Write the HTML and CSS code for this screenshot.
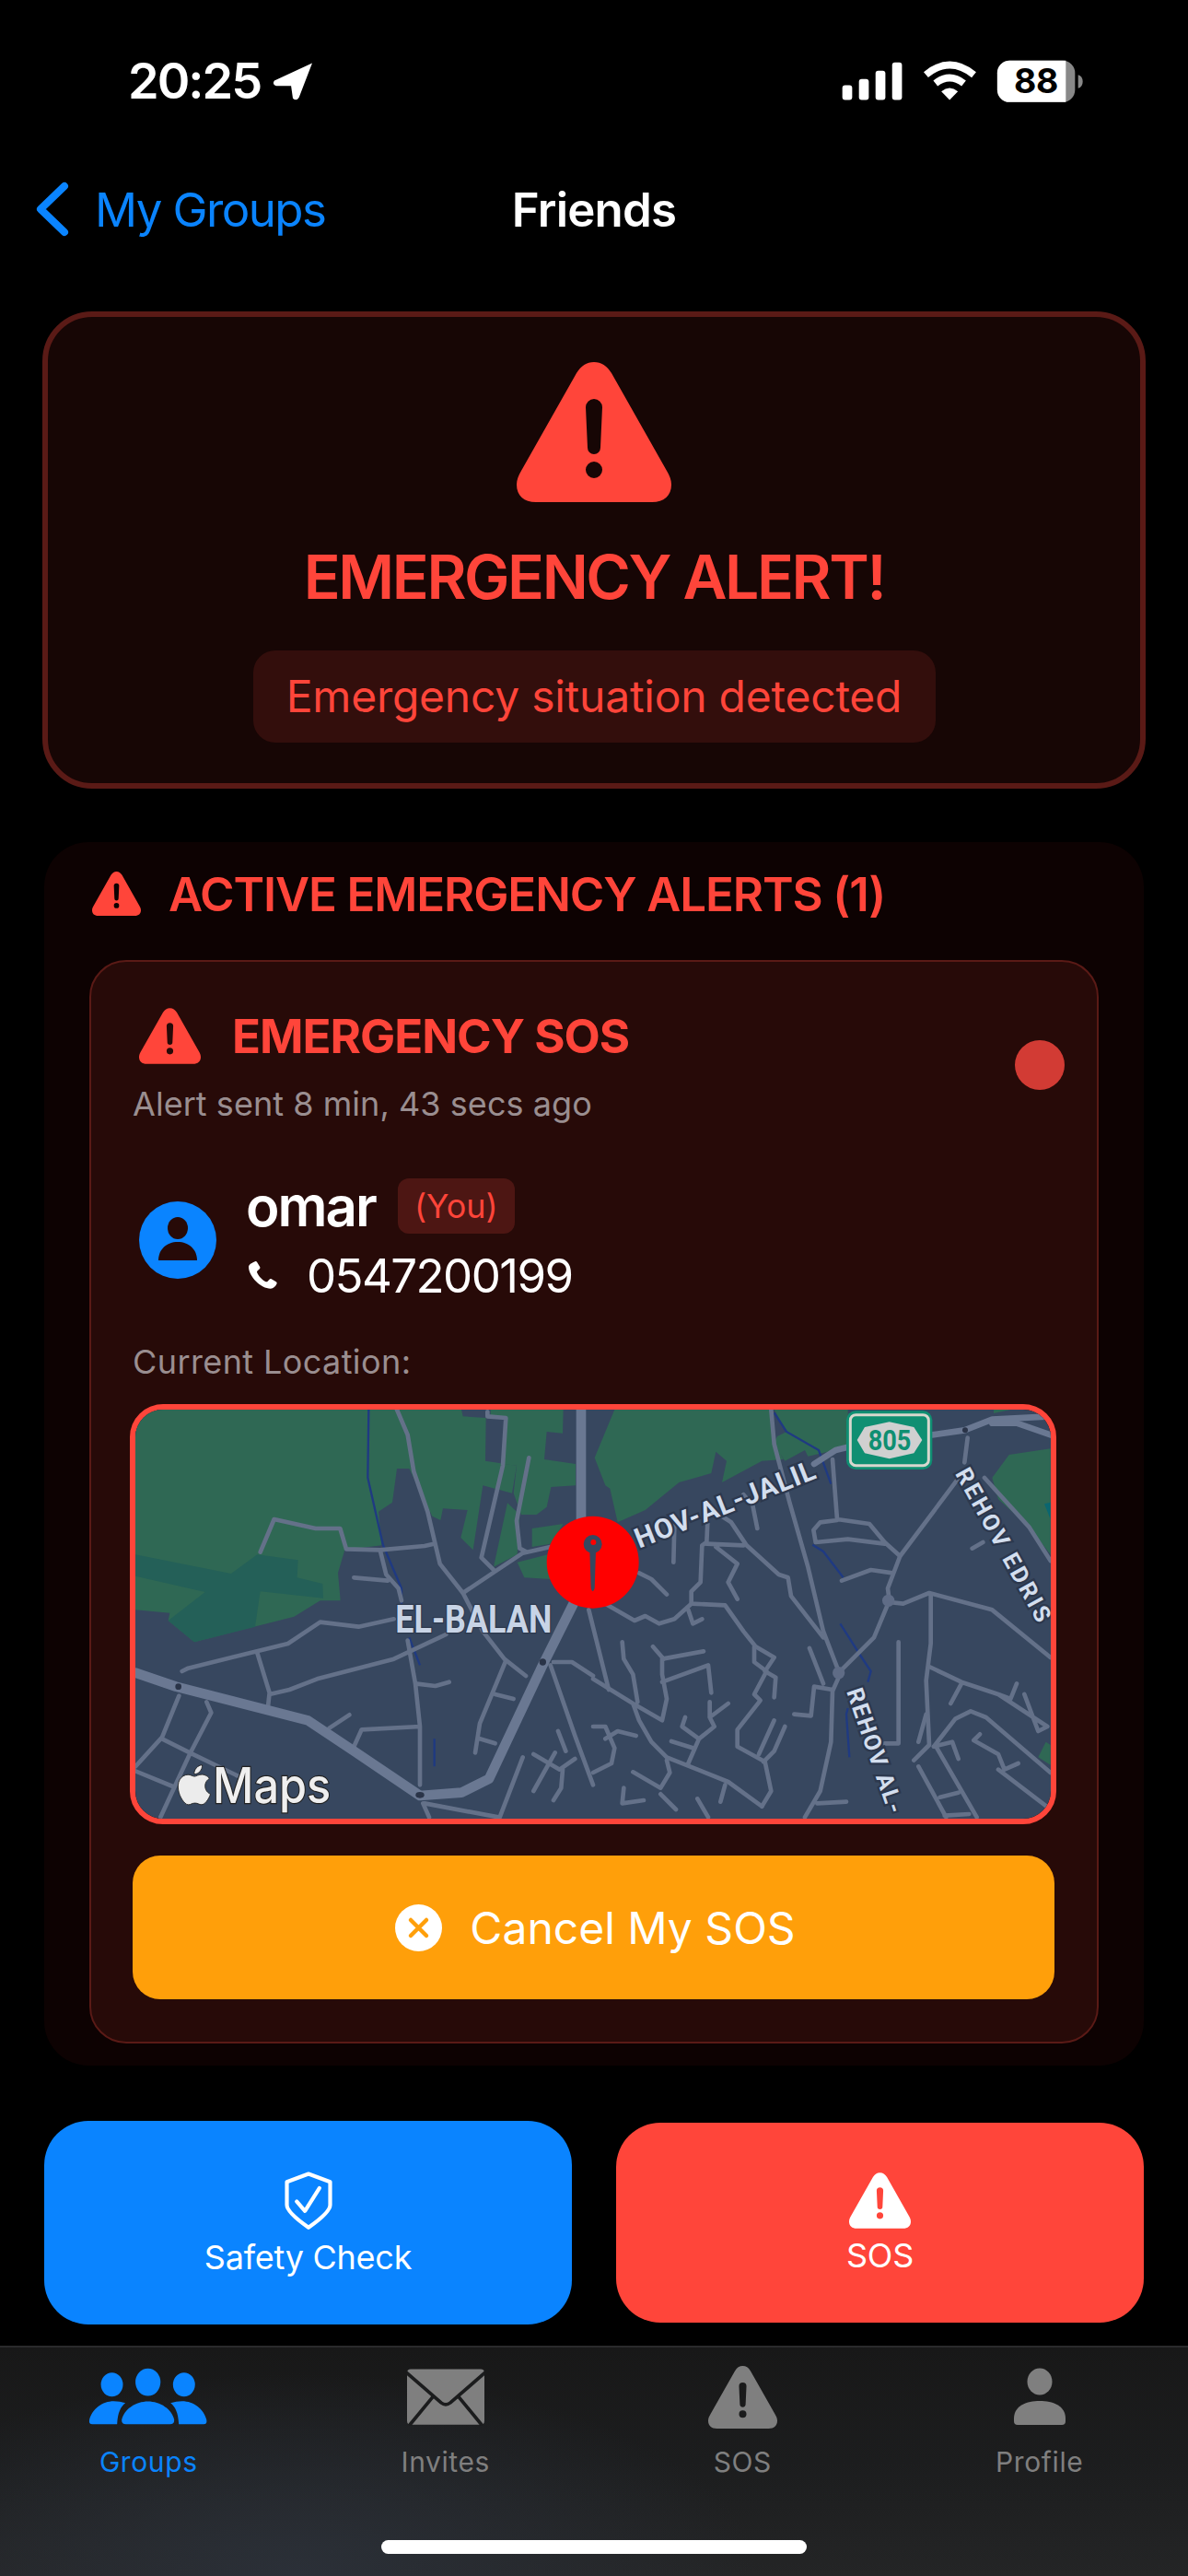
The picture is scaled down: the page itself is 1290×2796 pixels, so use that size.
FILE: index.html
```html
<!DOCTYPE html>
<html lang="en">
<head>
<meta charset="utf-8">
<title>Friends</title>
<link rel="stylesheet" href="styles.css">
</head>
<body>
<svg class="defs" width="0" height="0" aria-hidden="true">
  <symbol id="warn" viewBox="0 0 168 152">
    <path fill="currentColor" fill-rule="evenodd" d="M84 0C92 0 98 4 103 12L163 118C166 123 168 128 168 133C168 145 160 152 147 152H21C8 152 0 145 0 133C0 128 2 123 5 118L65 12C70 4 76 0 84 0ZM75 49A9 9 0 0 1 93 49L91 93A7 7 0 0 1 77 93ZM84 108A9 9 0 1 0 84.01 126A9 9 0 1 0 84 108Z"/>
  </symbol>
</svg>
<header class="status">
  <div class="time-wrap">
    <span class="time">20:25</span>
    <svg class="loc" viewBox="0 0 44 42"><path fill="#fff" d="M44 0L1 20Q-2 24 3 26H20L22 40Q26 44 29 39Z"/></svg>
  </div>
  <svg class="sys" viewBox="100 40 800 140">
    <g fill="#fff">
      <rect x="108" y="122" width="32" height="48" rx="9"/>
      <rect x="162" y="102" width="32" height="68" rx="9"/>
      <rect x="216" y="75" width="32" height="95" rx="9"/>
      <rect x="270" y="48" width="32" height="122" rx="9"/>
      <path d="M430 142Q457 120 484 142L457 170Z"/>
    </g>
    <g fill="none" stroke="#fff" stroke-width="23">
      <path d="M411 116Q457 80 503 116"/>
      <path d="M380 88Q457 24 536 88"/>
    </g>
    <rect x="612" y="42" width="253" height="135" rx="40" fill="#888"/>
    <path fill="#fff" d="M652 42H835V177H652A40 40 0 0 1 612 137V82A40 40 0 0 1 652 42Z"/>
    <path fill="#888" d="M875 88Q890 92 890 110Q890 128 875 132Z"/>
    <text class="batt" x="738" y="146" text-anchor="middle">88</text>
  </svg>
</header>

<nav class="nav">
  <a class="back">
    <svg class="chev" viewBox="0 0 37 60"><path d="M32 5L6 30L32 55"/></svg>
    <span>My Groups</span>
  </a>
  <h1 class="nav-title">Friends</h1>
  <span></span>
</nav>

<section class="banner">
  <svg class="banner-icon"><use href="#warn"/></svg>
  <h2 class="banner-title">EMERGENCY ALERT!</h2>
  <p class="banner-pill">Emergency situation detected</p>
</section>

<section class="panel">
  <div class="panel-head">
    <svg class="panel-icon"><use href="#warn"/></svg>
    <h3 class="panel-title">ACTIVE EMERGENCY ALERTS (1)</h3>
  </div>
  <article class="alert">
    <span class="dot"></span>
    <div class="alert-head">
      <svg class="alert-icon"><use href="#warn"/></svg>
      <h4 class="alert-title">EMERGENCY SOS</h4>
    </div>
    <p class="muted sent">Alert sent 8 min, 43 secs ago</p>
    <div class="user">
      <svg class="avatar" viewBox="0 0 84 84">
        <circle cx="42" cy="42" r="42" fill="#0a84ff"/>
        <ellipse cx="42" cy="29" rx="11" ry="12" fill="#270a08"/>
        <path fill="#270a08" d="M21 64C21 52 30 44 42 44C54 44 63 52 63 64Z"/>
      </svg>
      <div class="user-info">
        <div class="name-row"><span class="name">omar</span><span class="you">(You)</span></div>
        <div class="phone-row">
          <svg class="phone" viewBox="0 0 24 24"><path fill="#fff" d="M6.600 2.200C7.100 1.900 7.800 2.100 8.100 2.600L10.100 6C10.400 6.500 10.300 7.100 9.900 7.500L8.300 9C8 9.300 7.900 9.700 8.100 10.100C8.700 11.400 9.600 12.800 10.700 14C11.800 15.200 13.100 16.200 14.500 16.800C14.900 17 15.300 16.900 15.600 16.600L17 15.100C17.400 14.700 18 14.600 18.500 14.900L21.900 16.900C22.400 17.200 22.600 17.900 22.300 18.400C21.500 20.200 19.900 21.800 17.900 21.800C14.300 21.800 10.400 19.600 7.300 16.500C4.200 13.400 2 9.500 2 6C2 4.300 4.800 3 6.600 2.200Z"/></svg>
          <span class="number">0547200199</span>
        </div>
      </div>
    </div>
    <p class="muted loc-label">Current Location:</p>
    <div class="map">
      <svg class="map-svg" viewBox="18 18 2982 1332" preserveAspectRatio="none">
        <rect x="0" y="0" width="3018" height="1368" fill="#37475f"/>
        <g fill="#2f6854">
          <path d="M18 18H1080L1085 40L1160 45L1158 185L1260 200L1245 290L1150 265L1118 475L1078 435L1100 345L1020 340L1012 378L985 365L910 210H870L855 320L810 350L820 460L700 475L678 550L686 640H620L535 692L210 775L125 705L130 680L18 670Z"/>
          <path d="M1175 18H1412L1410 95L1358 90L1350 180L1452 195V265L1372 270L1358 335L1325 360H1275L1250 290L1260 200L1215 195L1230 45L1175 38Z"/>
          <path d="M1230 322L1185 530L1262 490L1270 360Z"/>
          <path d="M1310 405L1412 390L1370 455L1310 465Z"/>
          <path d="M1262 515L1285 565L1370 570L1400 480Z"/>
        </g>
        <path fill="#246058" d="M18 490L330 552L415 490L548 508L545 565L628 585L630 632L425 610L408 725L210 775L125 705L245 612L18 560Z"/>
        <g class="river">
          <path d="M778 18L775 240L825 460L885 600V680M910 760L945 850M992 1090V1180"/>
        </g>
        <g class="road">
          <path d="M870 18L905 100L925 220L970 350L1010 520L1085 615L1150 740L1220 830L1290 885"/>
          <path d="M425 482L470 375L605 405H685L705 472L815 475L960 462L990 455M815 475L835 555L875 600L885 640M730 565L840 575"/>
          <path d="M1300 175L1260 380L1270 470L1290 480M1165 25V40L1225 45L1215 200L1145 500L1190 545M1085 615L1190 545L1280 485L1370 465"/>
          <path d="M170 870L190 860L515 780L620 710L745 725L860 700M415 810L455 940L450 985M455 945L520 930L610 895L860 830L1030 750"/>
          <path d="M905 770L930 910L945 1050V1240M930 910L995 918L1040 905M650 1055L715 1012M730 1115L755 1060L945 1050"/>
          <path d="M1225 835L1140 1040L1125 1135M1190 945L1250 960M1140 1090L1190 1105"/>
          <path d="M250 970L265 1005L195 1140L100 1345M160 950L105 1085L18 1180M105 1090L195 1135L350 1210M18 1195L140 1245"/>
          <path d="M1280 1150L1205 1345M1395 1065L1420 1130M1315 1140L1400 1190L1450 1155M1385 1135L1315 1260M1410 1190L1405 1250L1380 1290M955 1300L975 1345M960 1300L1200 1345"/>
          <path d="M1370 850L1450 1080L1509 1240M1380 840H1440L1509 885M1495 670L1560 930"/>
        </g>
        <g class="road main">
          <path d="M18 875L150 920L580 1030L730 1130L945 1275L1080 1265L1170 1220L1340 860L1470 600V18"/>
        </g>
        <g transform="translate(1509 0)">
          <g fill="#2f6854">
            <path d="M70 18H575L590 130L625 185L690 150L700 170L830 140V18H590L630 90L600 105L590 125L620 180L550 185L420 255L435 185L400 155L385 225L280 255L170 345L80 385L55 275L40 265L5 175Z"/>
            <path d="M1355 165L1490 145V490L1420 400L1320 310L1300 240Z"/>
            <path d="M1450 1150L1475 1100L1490 1110V1175Z"/>
            <path d="M1305 18H1360L1305 30Z"/>
          </g>
          <path fill="#0b6670" d="M1470 325L1490 320V375Z"/>
          <g class="river">
            <path d="M590 28L630 90L735 150L775 260M715 458L750 480L815 565M805 715L875 825L905 870L895 905M830 990L825 1010L835 1150"/>
          </g>
          <g class="road">
            <path d="M580 18L590 130L640 320L700 530L750 740L800 870"/>
            <path d="M780 180L795 375L900 390L950 450L1000 495M795 378L740 385L718 410L725 450L830 440L950 455"/>
            <path d="M1000 495L1210 215M1000 495L960 600L965 640L915 760L800 875M810 575L905 540L975 550"/>
            <path d="M965 645L1010 650L1095 615L1300 670L1490 825M1100 620V780L1085 900L1095 1110L1045 1160"/>
            <path d="M1095 855L1200 905L1320 945L1360 960L1380 910M1200 910L1165 975M1320 945L1480 1050L1450 1065L1405 945"/>
            <path d="M1110 1115L1180 1025L1230 1000L1280 1020L1490 1200M1260 1075L1240 1095L1320 1140L1340 1190L1385 1170M1320 1190L1490 1320"/>
            <path d="M1060 1180L1150 1345M1120 1120L1250 1345M1130 1280L1190 1265M1145 1340L1225 1335M1110 1115L1170 1100L1190 1155M1060 1100L1085 1010"/>
            <path d="M995 775V1105H950M800 890L780 935L775 1100L740 1260L690 1345M730 1300L825 1295M780 930L720 920L710 1015L655 1010M705 795L750 910"/>
            <path d="M375 340L370 450L355 460L350 580L320 610V650L430 655L490 740L530 790L590 825L560 870L595 890L590 955"/>
            <path d="M380 340L450 385L500 460L605 555L635 565L645 625L750 760M370 455L490 460M400 465L470 520L440 580L470 635M490 295L520 330L535 405M265 395L262 515M150 550L190 570L240 620"/>
            <path d="M40 650L135 705L170 690L215 715L265 700L320 650M310 670L325 715L355 700"/>
            <path d="M0 895L130 975L150 1030L190 1100L240 1150L440 1230L550 1310M130 975L225 1030L240 960L225 880V830L360 805M195 790L230 830M225 905L375 850L385 940M95 775L100 830L130 880L145 970"/>
            <path d="M525 790V840L565 870L525 945L545 965L470 1060V1115L560 1165L580 1260L550 1310M590 1030L540 1140M625 1050L590 1130L555 1165"/>
            <path d="M380 970V1020L440 975M380 1020L395 1050L345 1090L290 1050L300 1020M345 1090L310 1170M255 1098L325 1120"/>
            <path d="M130 1198L220 1250L250 1200L240 1160M220 1270L270 1320M340 1285L375 1345M430 1240L415 1295M100 1250L95 1300L165 1290M0 1050H40L70 1120L60 1170L0 1200M40 1090L80 1065L140 1080"/>
            <path d="M1235 470L1270 450M1210 190L1220 110M1275 240L1420 400L1490 510"/>
          </g>
          <g class="road wide">
            <path d="M720 195L790 150L830 140M1105 100L1210 85L1300 50L1490 40"/>
            <path d="M1300 62L1380 62L1490 100"/>
          </g>
          <circle cx="1212" cy="85" r="9" fill="#2a3448"/>
          <circle cx="800" cy="875" r="20" fill="#5f6c86"/>
          <circle cx="962" cy="640" r="20" fill="#5f6c86"/>
          <rect x="825" y="22" width="280" height="191" rx="30" fill="#0f8f72"/>
          <rect x="838" y="35" width="255" height="165" rx="18" fill="none" stroke="#d7d7ce" stroke-width="9"/>
          <path fill="#d0d0d0" d="M860 117L885 75L965 58L1045 75L1072 117L1045 160L965 178L885 160Z"/>
          <text class="shield-num" x="896" y="150" textLength="140" lengthAdjust="spacingAndGlyphs">805</text>
          <text class="map-label small" transform="translate(150 470) rotate(-21.600)" textLength="625">HOV-AL-JALIL</text>
          <text class="map-label tiny" transform="translate(1178 226) rotate(61)" textLength="560">REHOV EDRIS</text>
          <text class="map-label tiny" transform="translate(825 935) rotate(71)" textLength="425">REHOV AL-</text>
        </g>
        <text class="map-label city" x="865" y="745" textLength="510" lengthAdjust="spacingAndGlyphs">EL-BALAN</text>
        <circle cx="158" cy="920" r="10" fill="#2a3448"/>
        <ellipse cx="945" cy="1273" rx="14" ry="10" fill="#2a3448"/>
        <circle cx="1345" cy="840" r="11" fill="#2a3448"/>
        <path class="apple" transform="translate(145 1175) scale(5.400)" d="M12.152 6.896c-.948 0-2.415-1.078-3.96-1.04-2.04.027-3.91 1.183-4.961 3.014-2.117 3.675-.546 9.103 1.519 12.09 1.013 1.454 2.208 3.09 3.792 3.039 1.52-.065 2.09-.987 3.935-.987 1.831 0 2.35.987 3.96.948 1.637-.026 2.676-1.48 3.676-2.948 1.156-1.688 1.636-3.325 1.662-3.415-.039-.013-3.182-1.221-3.22-4.857-.026-3.04 2.48-4.494 2.597-4.559-1.429-2.09-3.623-2.324-4.39-2.376-2-.156-3.675 1.09-4.61 1.09zM15.53 3.83c.843-1.012 1.4-2.427 1.245-3.83-1.207.052-2.662.805-3.532 1.818-.78.896-1.454 2.338-1.273 3.714 1.338.104 2.715-.688 3.559-1.701"/>
        <text class="maps-word" x="270" y="1300" textLength="385" lengthAdjust="spacingAndGlyphs">Maps</text>
        <circle cx="1508" cy="515" r="150" fill="#ff0000"/>
        <circle cx="1508" cy="456" r="30" fill="#37475f"/>
        <path fill="#37475f" d="M1498 480H1518L1514 600Q1508 620 1502 600Z"/>
        <circle cx="1510" cy="450" r="9" fill="#ff0000"/>
      </svg>
    </div>
    <button class="cancel">
      <svg class="cancel-icon" viewBox="0 0 51 51"><circle cx="25.500" cy="25.500" r="25.500" fill="#fff"/><path d="M17 17L34 34M34 17L17 34" stroke="#ff9f0a" stroke-width="4.500" stroke-linecap="round"/></svg>
      <span>Cancel My SOS</span>
    </button>
  </article>
</section>

<div class="actions">
  <button class="action safety">
    <svg class="shield" viewBox="170 44 170 202"><path d="M255 55L328 82V160Q328 185 255 236Q182 185 182 160V82Z" fill="none" stroke="#fff" stroke-width="13" stroke-linejoin="round"/><path d="M215 148L243 180L292 103" fill="none" stroke="#fff" stroke-width="13" stroke-linecap="round" stroke-linejoin="round"/></svg>
    <span>Safety Check</span>
  </button>
  <button class="action sos">
    <svg class="sos-icon"><use href="#warn"/></svg>
    <span>SOS</span>
  </button>
</div>

<footer class="tabbar">
  <div class="tab active">
    <svg class="tab-groups" viewBox="50 65 390 190">
      <g fill="#0a84ff">
        <ellipse cx="126" cy="120" rx="36" ry="39"/>
        <ellipse cx="244" cy="112" rx="41" ry="45"/>
        <ellipse cx="362" cy="120" rx="36" ry="39"/>
        <path d="M172 250Q158 250 158 236C165 200 205 175 244 175C283 175 323 200 330 236Q330 250 316 250Z"/>
        <path d="M62 250Q50 250 52 236C60 200 95 174 132 174Q152 174 170 180C155 192 145 210 143 250Z"/>
        <path transform="translate(488 0) scale(-1 1)" d="M62 250Q50 250 52 236C60 200 95 174 132 174Q152 174 170 180C155 192 145 210 143 250Z"/>
      </g>
    </svg>
    <span>Groups</span>
  </div>
  <div class="tab">
    <svg class="tab-mail" viewBox="1085 66 250 182">
      <rect x="1085" y="68" width="250" height="179" rx="12" fill="#7f7f7f"/>
      <path d="M1082 78L1195 176Q1210 188 1225 176L1338 78M1092 250L1170 155M1328 250L1250 155" fill="none" stroke="#1b1c1d" stroke-width="11"/>
    </svg>
    <span>Invites</span>
  </div>
  <div class="tab">
    <svg class="tab-sos"><use href="#warn"/></svg>
    <span>SOS</span>
  </div>
  <div class="tab">
    <svg class="tab-profile" viewBox="0 0 56 61">
      <ellipse cx="28" cy="14" rx="13.500" ry="14.500" fill="#7f7f7f"/>
      <path fill="#7f7f7f" d="M4 61Q0 61 0 57V54C0 40 14 35 28 35C42 35 56 40 56 54V57Q56 61 52 61Z"/>
    </svg>
    <span>Profile</span>
  </div>
  <span class="home"></span>
</footer>
</body>
</html>
```

FILE: styles.css
```css
* { box-sizing: border-box; }
html, body { margin: 0; padding: 0; }
body {
  width: 1290px;
  height: 2796px;
  overflow: hidden;
  background: #000;
  color: #fff;
  font-family: Inter, "Liberation Sans", sans-serif;
  display: flex;
  flex-direction: column;
}
h1, h2, h3, h4, p { margin: 0; font-weight: inherit; font-size: inherit; }
button { font: inherit; color: inherit; border: 0; padding: 0; }
svg { display: block; flex: none; }
.defs { position: absolute; }

.status {
  height: 176px;
  display: flex;
  justify-content: space-between;
  align-items: center;
  padding: 0 111px 0 139px;
}
.time-wrap { display: flex; align-items: center; gap: 14px; }
.time { font-size: 54px; font-weight: 600; letter-spacing: -2px; line-height: 60px; }
.loc { width: 42px; height: 41px; }
.sys { width: 267px; height: 47px; }
.batt { font: 700 112px Inter, sans-serif; fill: #000; letter-spacing: -1px; }

.nav {
  height: 102px;
  display: grid;
  grid-template-columns: 1fr auto 1fr;
  align-items: center;
  padding: 0 38px;
}
.back { display: flex; align-items: center; gap: 28px; color: #0a84ff; font-size: 51px; letter-spacing: -1.6px; }
.chev { width: 37px; height: 60px; }
.chev path { fill: none; stroke: #0a84ff; stroke-width: 8px; stroke-linecap: round; stroke-linejoin: round; }
.nav-title { font-size: 51px; font-weight: 600; letter-spacing: -.8px; }

.banner {
  margin: 60px 46px 0;
  height: 518px;
  border: 6px solid #5a1a16;
  border-radius: 54px;
  background: #170605;
  display: flex;
  flex-direction: column;
  align-items: center;
  padding-top: 49px;
  color: #ff453a;
}
.banner-icon { width: 168px; height: 152px; }
.banner-title { margin-top: 41px; font-size: 66px; line-height: 80px; font-weight: 600; letter-spacing: -2.4px; }
.banner-pill {
  margin-top: 40px;
  width: 741px;
  height: 100px;
  border-radius: 24px;
  background: #330e0c;
  font-size: 48px;
  line-height: 100px;
  text-align: center;
  letter-spacing: -.25px;
}

.panel {
  margin: 58px 48px 0;
  height: 1328px;
  border-radius: 48px;
  background: #0d0202;
  color: #ff453a;
  padding-top: 32px;
}
.panel-head { height: 48px; padding-left: 52px; display: flex; align-items: center; gap: 30px; }
.panel-icon { width: 53px; height: 48px; }
.panel-title { font-size: 51px; font-weight: 600; letter-spacing: -1.1px; }

.alert {
  position: relative;
  margin: 48px 49px 0;
  height: 1176px;
  padding: 50px 45px 0;
  background: #270a08;
  border: 2px solid #5a1a16;
  border-radius: 40px;
}
.dot { position: absolute; top: 85px; right: 35px; width: 54px; height: 54px; border-radius: 50%; background: #d23b34; }
.alert-head { display: flex; align-items: center; gap: 34px; padding-left: 7px; height: 61px; }
.alert-icon { width: 67px; height: 61px; }
.alert-title { font-size: 51px; font-weight: 700; letter-spacing: -1px; }
.muted { color: #9a8e90; font-size: 36px; line-height: 44px; }
.sent { margin-top: 21px; letter-spacing: .05px; }
.user { margin-top: 59px; display: flex; align-items: center; gap: 32px; padding-left: 7px; }
.avatar { width: 84px; height: 84px; }
.name-row { display: flex; align-items: center; gap: 24px; height: 60px; }
.name { color: #fff; font-size: 60px; font-weight: 600; letter-spacing: -2px; }
.you {
  width: 127px;
  height: 60px;
  border-radius: 12px;
  background: #4d1613;
  font-size: 36px;
  line-height: 60px;
  text-align: center;
}
.phone-row { margin-top: 17px; height: 56px; display: flex; align-items: center; gap: 30px; }
.phone { width: 36px; height: 36px; }
.number { color: #fff; font-size: 51px; letter-spacing: -1.6px; }
.loc-label { margin-top: 44px; letter-spacing: .4px; }

.map {
  margin: 24px 0 0 -3px;
  width: 1006px;
  height: 456px;
  border: 6px solid #ff453a;
  border-radius: 36px;
  overflow: hidden;
}
.map-svg { width: 994px; height: 444px; }
.road { fill: none; stroke: #647189; stroke-width: 14; stroke-linejoin: round; stroke-linecap: round; }
.road.main { stroke: #6a7892; stroke-width: 32; }
.road.wide { stroke: #6a7892; stroke-width: 20; }
.river { fill: none; stroke: #1f3a82; stroke-width: 7; }
.map-label {
  font-family: Roboto, Inter, sans-serif;
  font-weight: 500;
  fill: #d3deee;
  stroke: #2c384d;
  stroke-width: 14px;
  paint-order: stroke;
}
.map-label.city { font-size: 130px; font-weight: 700; fill: #c8d4e6; stroke-width: 8px; }
.map-label.small { font-size: 90px; font-weight: 700; }
.map-label.tiny { font-size: 76px; font-weight: 700; }
.shield-num { font: 700 96px Roboto, sans-serif; fill: #0f8f72; }
.apple { fill: #ececec; stroke: #222; stroke-width: .5px; }
.maps-word { font: 500 160px Inter, sans-serif; fill: #efefef; stroke: #222; stroke-width: 7px; paint-order: stroke; }

.cancel {
  margin-top: 34px;
  width: 1001px;
  height: 156px;
  border-radius: 30px;
  background: #ff9f0a;
  display: flex;
  align-items: center;
  justify-content: center;
  gap: 30px;
  padding-left: 4px;
  font-size: 48px;
  color: #fff;
}
.cancel-icon { width: 51px; height: 51px; }

.actions {
  margin-top: 60px;
  padding: 0 48px;
  display: grid;
  grid-template-columns: 573px 573px;
  gap: 48px;
  align-items: center;
}
.action {
  display: flex;
  flex-direction: column;
  align-items: center;
  justify-content: center;
  gap: 7px;
  padding-top: 3px;
  border-radius: 48px;
  font-size: 36px;
  line-height: 44px;
  letter-spacing: -.25px;
  color: #fff;
}
.safety { height: 221px; background: #0a84ff; }
.sos { height: 217px; background: #ff453a; }
.shield { width: 56px; height: 65px; }
.sos-icon { width: 67px; height: 61px; }

.tabbar {
  position: relative;
  margin-top: auto;
  height: 250px;
  border-top: 2px solid #2a2a2c;
  background:
    radial-gradient(ellipse 500px 220px at 25% 100%, #2b3038, rgba(43, 48, 56, 0)),
    linear-gradient(#181818, #1c1d1e 50%, #242526);
  display: grid;
  grid-template-columns: repeat(4, 1fr);
  padding-top: 20px;
}
.tab {
  display: flex;
  flex-direction: column;
  align-items: center;
  color: #7f7f7f;
  font-size: 30px;
  line-height: 44px;
  letter-spacing: .6px;
}
.tab span { margin-top: 14px; }
.tab svg { height: 68px; }
.tab.active { color: #0a84ff; }
.tab-groups { width: 130px; }
.tab-mail { width: 84px; }
.tab-sos { width: 75px; }
.tab-profile { width: 56px; }
.tab .tab-groups, .tab .tab-mail, .tab .tab-profile { height: 63px; margin: 2px 0 3px; }
.home {
  position: absolute;
  left: 414px;
  bottom: 24px;
  width: 462px;
  height: 15px;
  border-radius: 8px;
  background: #fff;
}
```
